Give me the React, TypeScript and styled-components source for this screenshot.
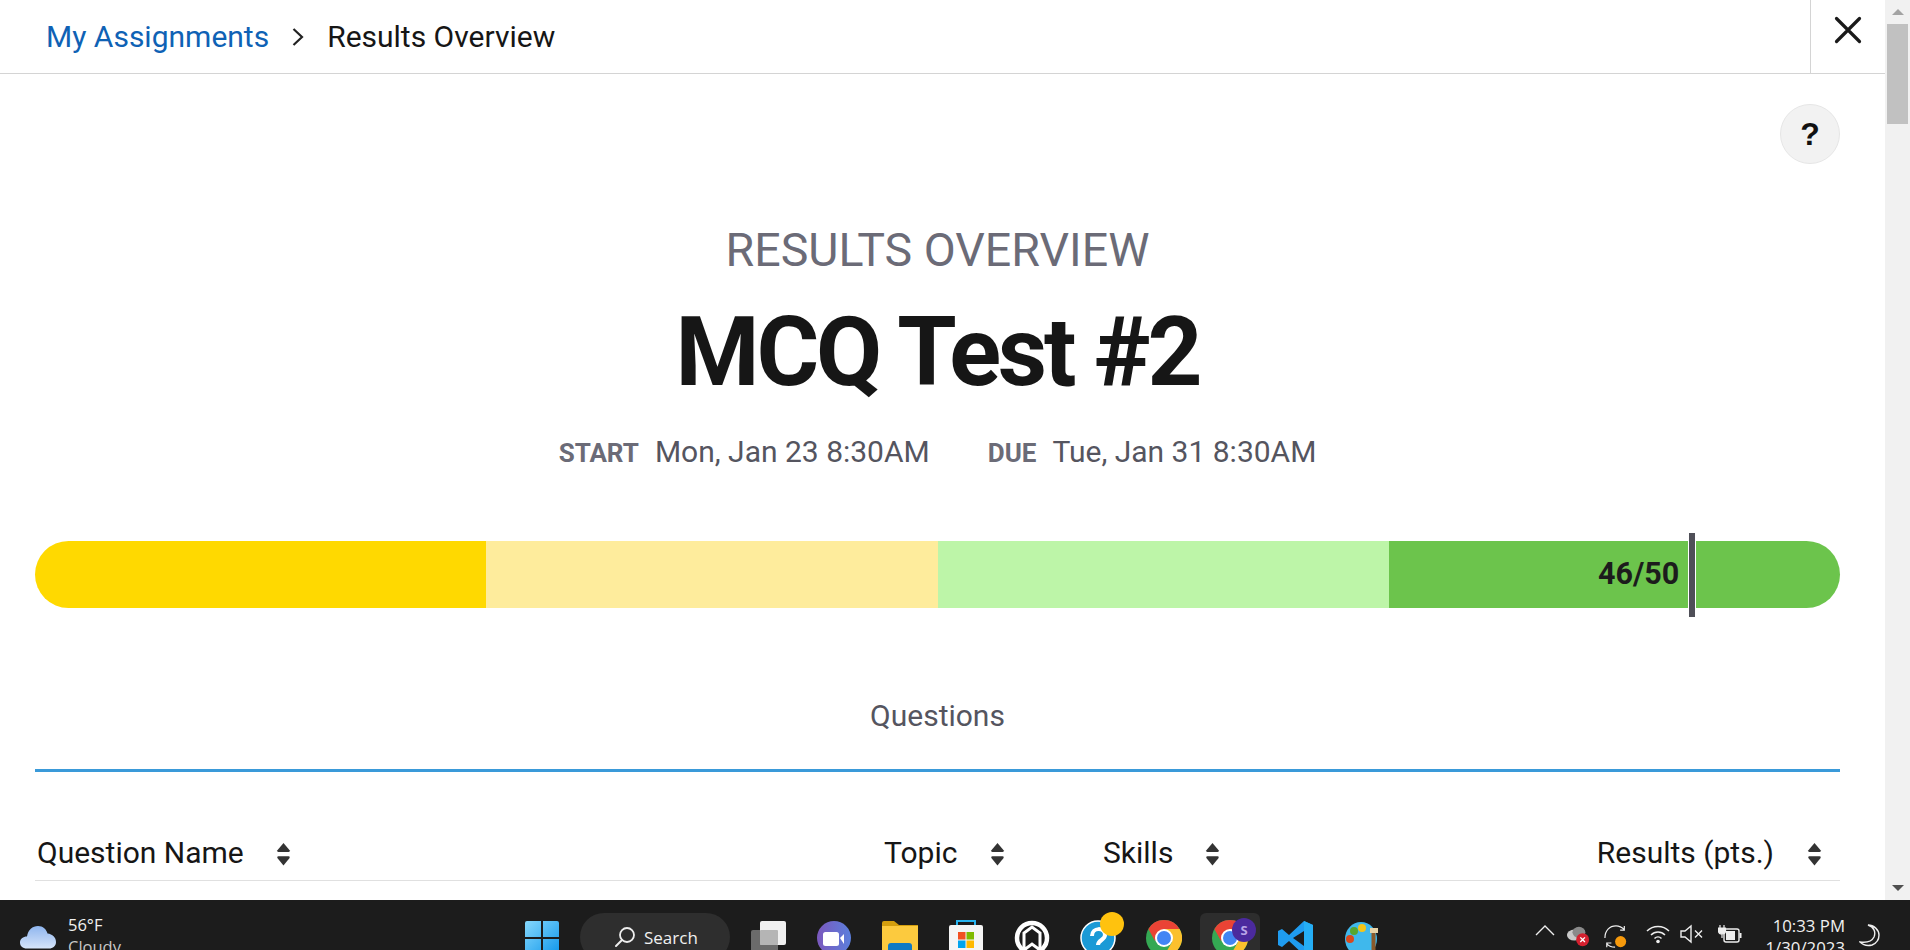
import styled, { createGlobalStyle } from 'styled-components'
import { ReactNode } from 'react'

const GlobalStyle = createGlobalStyle`
  html, body {
    margin: 0;
    padding: 0;
    height: 950px;
    overflow: hidden;
    background: #fff;
    font-family: Roboto, "Liberation Sans", sans-serif;
  }
  * { box-sizing: border-box; }
`

const segments = ['#ffd900', '#feec9c', '#bdf5a8', '#6cc44c']

const columns = [
  { label: 'Question Name', gap: 32 },
  { label: 'Topic', gap: 33 },
  { label: 'Skills', gap: 32 },
  { label: 'Results (pts.)', gap: 33 },
]

const SortIcon = () => (
  <svg width="15" height="24" viewBox="0 0 15 24">
    <path d="M7.5 1 L13.6 8.2 Q14.4 10 12.6 10 H2.4 Q.6 10 1.4 8.2 Z" fill="#333" />
    <path d="M7.5 23.5 L13.6 16 Q14.4 14.2 12.6 14.2 H2.4 Q.6 14.2 1.4 16 Z" fill="#333" />
  </svg>
)

const App = () => (
  <>
    <GlobalStyle />
    <Page>
      <Upper>
        <Main>
          <TopBar>
            <Crumbs>
              <CrumbLink>My Assignments</CrumbLink>
              <svg width="14" height="20" viewBox="0 0 14 20">
                <path d="M2.5 2 L11 10 L2.5 18" fill="none" stroke="#222" strokeWidth="2.2" />
              </svg>
              <CrumbCurrent>Results Overview</CrumbCurrent>
            </Crumbs>
            <CloseCell>
              <svg width="30" height="30" viewBox="0 0 30 30">
                <path d="M3.5 3.5 L26.5 26.5 M26.5 3.5 L3.5 26.5" stroke="#1a1a1a" strokeWidth="3.2" strokeLinecap="round" />
              </svg>
            </CloseCell>
          </TopBar>

          <Content>
            <HelpRow>
              <HelpButton>?</HelpButton>
            </HelpRow>
            <Eyebrow>RESULTS OVERVIEW</Eyebrow>
            <Title>MCQ Test #2</Title>
            <Dates>
              <DateItem><DateLabel>START</DateLabel>Mon, Jan 23 8:30AM</DateItem>
              <DateItem><DateLabel>DUE</DateLabel>Tue, Jan 31 8:30AM</DateItem>
            </Dates>

            <ScoreBar>
              {segments.map((c) => (
                <Segment key={c} $color={c} />
              ))}
              <Marker>
                <ScoreText>46/50</ScoreText>
              </Marker>
            </ScoreBar>

            <TabLabel>Questions</TabLabel>
            <TabLine />

            <TableHead>
              {columns.map((col) => (
                <HeadCell key={col.label} $gap={col.gap}>
                  {col.label}
                  <SortIcon />
                </HeadCell>
              ))}
            </TableHead>
          </Content>
        </Main>

        <Scrollbar>
          <ScrollArrow>
            <svg width="12" height="8" viewBox="0 0 12 8"><path d="M6 1 L12 7 H0 Z" fill="#a3a3a3" /></svg>
          </ScrollArrow>
          <ScrollThumb />
          <ScrollSpacer />
          <ScrollArrow>
            <svg width="12" height="8" viewBox="0 0 12 8"><path d="M6 7 L12 1 H0 Z" fill="#505050" /></svg>
          </ScrollArrow>
        </Scrollbar>
      </Upper>

      <Taskbar>
        <Weather>
          <svg width="36" height="24" viewBox="0 0 36 24">
            <defs>
              <linearGradient id="cl" x1="0" y1="0" x2="0" y2="1">
                <stop offset="0" stopColor="#8fb6ef" />
                <stop offset=".6" stopColor="#b9d1f5" />
                <stop offset="1" stopColor="#d6e5fa" />
              </linearGradient>
            </defs>
            <path d="M7 23.5 C2.5 23.5 0 21 0 17.5 C0 14 3 11.5 7 11.5 C8 5 12.5 1 18 1 C23 1 26.5 4.5 27.5 8.5 C32.5 9 36 12.5 36 17 C36 21 33 23.5 29 23.5 Z" fill="url(#cl)" />
          </svg>
          <WeatherText>
            <span>56°F</span>
            <WeatherSub>Cloudy</WeatherSub>
          </WeatherText>
        </Weather>

        <CenterIcons>
          <TaskIcon>
            <svg width="36" height="36" viewBox="0 0 36 36">
              <defs>
                <linearGradient id="win" x1="0" y1="0" x2="1" y2="1">
                  <stop offset="0" stopColor="#86d8fd" />
                  <stop offset="1" stopColor="#0f96ea" />
                </linearGradient>
              </defs>
              <path d="M1 3 Q1 1 3 1 H17 V17 H1 Z M19 1 H33 Q35 1 35 3 V17 H19 Z M1 19 H17 V35 H3 Q1 35 1 33 Z M19 19 H35 V33 Q35 35 33 35 H19 Z" fill="url(#win)" />
            </svg>
          </TaskIcon>
          <SearchPill>
            <svg width="22" height="22" viewBox="0 0 22 22">
              <circle cx="13" cy="9" r="7" fill="none" stroke="#eee" strokeWidth="1.8" />
              <path d="M8 14 L2 20" stroke="#eee" strokeWidth="2" strokeLinecap="round" />
            </svg>
            Search
          </SearchPill>
          <TaskIcon>
            <svg width="36" height="36" viewBox="0 0 36 36">
              <rect x="1" y="10" width="27" height="26" rx="2" fill="#6b6b6b" />
              <rect x="10" y="1" width="26" height="24" rx="2" fill="#f0f0f0" />
              <rect x="10" y="10" width="18" height="15" rx="1" fill="#b5b5b5" />
            </svg>
          </TaskIcon>
          <TaskIcon>
            <svg width="36" height="36" viewBox="0 0 36 36">
              <defs>
                <linearGradient id="meet" x1="0" y1="0" x2="1" y2="0">
                  <stop offset="0" stopColor="#7b58bd" />
                  <stop offset="1" stopColor="#5b7fdc" />
                </linearGradient>
              </defs>
              <circle cx="18" cy="18" r="17" fill="url(#meet)" />
              <rect x="7" y="12" width="16" height="14" rx="2.5" fill="#fff" />
              <path d="M24 18 L28 14 V24 Z" fill="#fff" />
            </svg>
          </TaskIcon>
          <TaskIcon>
            <svg width="36" height="36" viewBox="0 0 36 36">
              <path d="M0 3 Q0 1 2 1 H12 L17 5 H36 V36 H0 Z" fill="#d39e0e" />
              <rect y="6" width="36" height="30" fill="#fcca3e" />
              <rect x="6" y="23" width="24" height="13" rx="3" fill="#0f79c4" />
            </svg>
          </TaskIcon>
          <TaskIcon>
            <svg width="36" height="36" viewBox="0 0 36 36">
              <path d="M9 6 V1 H27 V6" fill="none" stroke="#27b4f0" strokeWidth="2" />
              <rect x="1" y="5" width="34" height="31" rx="2" fill="#f5f5f5" />
              <rect x="10" y="12" width="7.5" height="7.5" fill="#f25022" />
              <rect x="18.5" y="12" width="7.5" height="7.5" fill="#7fba00" />
              <rect x="10" y="20.5" width="7.5" height="7.5" fill="#00a4ef" />
              <rect x="18.5" y="20.5" width="7.5" height="7.5" fill="#ffb900" />
            </svg>
          </TaskIcon>
          <TaskIcon>
            <svg width="36" height="36" viewBox="0 0 36 36">
              <circle cx="18" cy="18" r="15" fill="none" stroke="#fff" strokeWidth="4.5" />
              <path d="M10 30 V13 L18 7 L26 13 V30 L18 24 Z" fill="none" stroke="#fff" strokeWidth="3" />
            </svg>
          </TaskIcon>
          <TaskIcon>
            <svg width="36" height="36" viewBox="0 0 36 36">
              <circle cx="18" cy="18" r="17" fill="#1b9ad6" stroke="#fff" strokeWidth="1.5" />
              <path d="M12 16 C12 7 25 7 25 15 C25 20 18 20 18 25" fill="none" stroke="#fff" strokeWidth="4" />
            </svg>
            <HelpDot />
          </TaskIcon>
          <TaskIcon>
            <ChromeLogo />
          </TaskIcon>
          <ActiveTask>
            <ChromeLogo />
            <ProfileBadge>S</ProfileBadge>
          </ActiveTask>
          <TaskIcon>
            <svg width="36" height="36" viewBox="0 0 36 36">
              <path d="M26 1 L35 5 V31 L26 35 L11 21 L4 27 L0 25 V11 L4 9 L11 15 Z" fill="#1f9cf0" />
              <path d="M26 11 L15 18 L26 26 Z" fill="#1c1c1c" />
              <path d="M26 1 L35 5 V31 L26 35 Z" fill="#25aef5" />
            </svg>
          </TaskIcon>
          <TaskIcon>
            <svg width="36" height="36" viewBox="0 0 36 36">
              <ellipse cx="17" cy="19" rx="16" ry="17" fill="#3fb8ec" />
              <circle cx="18" cy="8" r="4" fill="#f5c518" />
              <circle cx="10" cy="11" r="4" fill="#55a630" />
              <circle cx="6" cy="19" r="4" fill="#d9481c" />
              <rect x="26" y="8" width="8" height="5" fill="#e6d3a8" />
              <rect x="27.5" y="13" width="4" height="23" fill="#8a5a2b" />
            </svg>
          </TaskIcon>
        </CenterIcons>

        <Tray>
          <TrayIcon $nudge={5}>
            <svg width="20" height="12" viewBox="0 0 20 12">
              <path d="M1 11 L10 2 L19 11" fill="none" stroke="#eee" strokeWidth="1.4" />
            </svg>
          </TrayIcon>
          <TrayIcon>
            <svg width="26" height="24" viewBox="0 0 26 24">
              <ellipse cx="9" cy="11" rx="8" ry="6" fill="#c9c9c9" />
              <ellipse cx="14" cy="8" rx="7" ry="6" fill="#8a8a8a" />
              <circle cx="18" cy="16" r="7" fill="#d5202f" />
              <path d="M15.5 13.5 L20.5 18.5 M20.5 13.5 L15.5 18.5" stroke="#fff" strokeWidth="1.5" />
            </svg>
          </TrayIcon>
          <TrayIcon>
            <svg width="26" height="26" viewBox="0 0 26 26">
              <path d="M1 14 C1 6 6 1 13 1 C17 1 20 3 22 5 M22 1 V5.5 H17.5" fill="none" stroke="#eee" strokeWidth="1.3" />
              <path d="M12 24 C8 24 5 23 3 20 M3 24 V19.5 H8" fill="none" stroke="#eee" strokeWidth="1.3" />
              <circle cx="18" cy="18" r="6" fill="#f79a0c" />
            </svg>
          </TrayIcon>
          <TrayIcon $nudge={4}>
            <svg width="24" height="20" viewBox="0 0 24 20">
              <path d="M1 7 C7 1 17 1 23 7 M5 11 C9 7 15 7 19 11 M8.5 14.5 C10.5 12.5 13.5 12.5 15.5 14.5" fill="none" stroke="#eee" strokeWidth="1.5" />
              <circle cx="12" cy="17.5" r="1.8" fill="#eee" />
            </svg>
          </TrayIcon>
          <TrayIcon>
            <svg width="24" height="20" viewBox="0 0 24 20">
              <path d="M1 7 H5 L11 2 V18 L5 13 H1 Z" fill="none" stroke="#eee" strokeWidth="1.4" />
              <path d="M15 6.5 L22 13.5 M22 6.5 L15 13.5" stroke="#eee" strokeWidth="1.4" />
            </svg>
          </TrayIcon>
          <TrayIcon>
            <svg width="24" height="22" viewBox="0 0 24 22">
              <path d="M2 1 V4 M6 1 V4 M0.5 4 H7.5 V7 Q7.5 10 4 10 Q0.5 10 0.5 7 Z M4 10 V14" fill="#eee" stroke="#eee" strokeWidth="1.2" />
              <rect x="6" y="5" width="15" height="13" rx="2" fill="none" stroke="#eee" strokeWidth="1.4" />
              <rect x="8" y="7" width="9" height="9" fill="#eee" />
              <rect x="21.5" y="9" width="2" height="5" fill="#eee" />
            </svg>
          </TrayIcon>
          <Clock>
            <span>10:33 PM</span>
            <span>1/30/2023</span>
          </Clock>
          <svg width="21" height="23" viewBox="0 0 21 23">
            <path d="M9 1 C15 3 17 8 15 13 C13 17 8 19 1 18 C4 21 9 22 13 21 C18 19 20 15 20 11 C20 6 15 1 9 1 Z" fill="none" stroke="#eee" strokeWidth="1.4" />
          </svg>
        </Tray>
      </Taskbar>
    </Page>
  </>
)

const ChromeLogo = (): ReactNode => (
  <svg width="36" height="36" viewBox="0 0 36 36">
    <circle cx="18" cy="18" r="18" fill="#34a853" />
    <path d="M18 0 A18 18 0 0 1 33.6 9 L18 9 L9 21 L2.4 9 A18 18 0 0 1 18 0 Z" fill="#ea4335" />
    <path d="M33.6 9 A18 18 0 0 1 18 36 L26 22 L18 9 Z" fill="#fbc02d" />
    <circle cx="18" cy="18" r="9" fill="#fff" />
    <circle cx="18" cy="18" r="7" fill="#4285f4" />
  </svg>
)

const Page = styled.div`
  width: 1910px;
  height: 950px;
  display: flex;
  flex-direction: column;
  overflow: hidden;
`

const Upper = styled.div`
  flex: 1;
  min-height: 0;
  display: flex;
`

const Main = styled.main`
  flex: 1;
  min-width: 0;
  display: flex;
  flex-direction: column;
`

const TopBar = styled.header`
  height: 74px;
  flex: none;
  display: flex;
  justify-content: space-between;
  border-bottom: 1px solid #d4d4d4;
`

const Crumbs = styled.nav`
  display: flex;
  align-items: center;
  gap: 22px;
  padding-left: 46px;
  font-size: 30px;
`

const CrumbLink = styled.span`
  color: #0f62b5;
`

const CrumbCurrent = styled.span`
  color: #161616;
`

const CloseCell = styled.div`
  width: 75px;
  display: flex;
  align-items: flex-start;
  justify-content: center;
  padding-top: 15px;
  border-left: 1px solid #d4d4d4;
`

const Content = styled.div`
  padding: 0 45px 0 35px;
  display: flex;
  flex-direction: column;
`

const HelpRow = styled.div`
  display: flex;
  justify-content: flex-end;
  padding-top: 30px;
`

const HelpButton = styled.div`
  width: 60px;
  height: 60px;
  border-radius: 50%;
  background: #f2f2f2;
  border: 1px solid #e6e6e6;
  display: flex;
  align-items: center;
  justify-content: center;
  font: bold 32px "Liberation Sans", sans-serif;
  color: #111;
`

const Eyebrow = styled.div`
  margin-top: 60px;
  text-align: center;
  font-size: 46.5px;
  font-weight: 400;
  line-height: 52px;
  color: #6b6b77;
`

const Title = styled.h1`
  margin: 20px 0 0;
  text-align: center;
  font-size: 96px;
  font-weight: 700;
  line-height: 112px;
  letter-spacing: -3.2px;
  color: #161616;
`

const Dates = styled.div`
  margin-top: 26px;
  display: flex;
  justify-content: center;
  gap: 58px;
  font-size: 30px;
  line-height: 36px;
  color: #55555f;
`

const DateItem = styled.div`
  display: flex;
  align-items: baseline;
  gap: 16px;
`

const DateLabel = styled.span`
  font-size: 26px;
  font-weight: 700;
  color: #6b6b77;
`

const ScoreBar = styled.div`
  position: relative;
  margin-top: 70px;
  height: 67px;
  display: flex;
`

const Segment = styled.div<{ $color: string }>`
  flex: 1;
  background: ${(p) => p.$color};

  &:first-child {
    border-radius: 34px 0 0 34px;
  }

  &:nth-child(4) {
    border-radius: 0 34px 34px 0;
  }
`

/* sits on top of the bar at the 46/50 point of its scale */
const Marker = styled.div`
  position: absolute;
  left: 91.6%;
  top: -8px;
  bottom: -9px;
  width: 8px;
  background: #4f4f58;
  border-left: 1px solid #fff;
  border-right: 1px solid #fff;
`

const ScoreText = styled.span`
  position: absolute;
  right: calc(100% + 10px);
  top: 23px;
  font-size: 30.5px;
  font-weight: 700;
  line-height: 36px;
  white-space: nowrap;
  color: #1c1c1c;
`

const TabLabel = styled.div`
  margin-top: 90px;
  text-align: center;
  font-size: 30px;
  line-height: 36px;
  color: #55555f;
`

const TabLine = styled.div`
  margin-top: 35px;
  height: 3px;
  background: #3a9ad9;
`

const TableHead = styled.div`
  margin-top: 63px;
  height: 46px;
  display: grid;
  grid-template-columns: 847px 219px 1fr auto;
  border-bottom: 1px solid #e0e0e0;
`

const HeadCell = styled.div<{ $gap: number }>`
  display: flex;
  align-items: flex-start;
  gap: ${(p) => p.$gap}px;
  padding: 0 18px 0 2px;
  font-size: 30px;
  line-height: 36px;
  color: #161616;

  svg {
    margin-top: 7px;
  }
`

const Scrollbar = styled.aside`
  width: 25px;
  flex: none;
  background: #f1f1f1;
  display: flex;
  flex-direction: column;
  align-items: center;
`

const ScrollArrow = styled.div`
  height: 24px;
  flex: none;
  display: flex;
  align-items: center;
  justify-content: center;
`

const ScrollThumb = styled.div`
  width: 21px;
  height: 100px;
  flex: none;
  background: #c1c1c1;
`

const ScrollSpacer = styled.div`
  flex: 1;
`

const Taskbar = styled.footer`
  height: 50px;
  flex: none;
  background: #1c1c1c;
  display: flex;
  align-items: flex-start;
  overflow: hidden;
  font-family: "Open Sans", "Noto Sans", sans-serif;
  color: #f0f0f0;
`

const Weather = styled.div`
  width: 524px;
  flex: none;
  display: flex;
  gap: 12px;
  padding: 25px 0 0 20px;
`

const WeatherText = styled.div`
  display: flex;
  flex-direction: column;
  font-size: 16.5px;
  line-height: 22px;
  margin-top: -11px;
`

const WeatherSub = styled.span`
  color: #c8c8c8;
`

const CenterIcons = styled.div`
  display: flex;
  align-items: flex-start;
  gap: 30px;
  padding-top: 20px;
`

const TaskIcon = styled.div`
  position: relative;
  width: 36px;
  height: 36px;
  flex: none;
`

const SearchPill = styled.div`
  width: 150px;
  height: 48px;
  margin: -7px -10px 0 -10px;
  padding-left: 34px;
  flex: none;
  display: flex;
  align-items: center;
  gap: 8px;
  border-radius: 24px;
  background: #2e2e2e;
  font-size: 17px;
`

const HelpDot = styled.span`
  position: absolute;
  top: -8px;
  right: -8px;
  width: 24px;
  height: 24px;
  border-radius: 50%;
  background: #ffc20e;
`

const ActiveTask = styled.div`
  position: relative;
  width: 60px;
  height: 50px;
  margin: -7px -12px 0 -12px;
  padding: 7px 12px 0;
  flex: none;
  border-radius: 6px 6px 0 0;
  background: #2d2d2d;
`

const ProfileBadge = styled.span`
  position: absolute;
  top: 5px;
  right: 4px;
  width: 24px;
  height: 24px;
  border-radius: 50%;
  background: #4b2a9e;
  color: #b9a6e8;
  font-size: 13px;
  font-weight: 700;
  display: flex;
  align-items: center;
  justify-content: center;
`

const Tray = styled.div`
  margin-left: auto;
  display: flex;
  align-items: flex-start;
  gap: 14px;
  padding: 24px 30px 0 0;
`

const TrayIcon = styled.div<{ $nudge?: number }>`
  width: 24px;
  display: flex;
  justify-content: center;
  transform: translateX(${(p) => p.$nudge ?? 0}px);
`

const Clock = styled.div`
  margin: -9px 0 0 10px;
  display: flex;
  flex-direction: column;
  align-items: flex-end;
  font-size: 16.8px;
  line-height: 22px;
`

export default App
